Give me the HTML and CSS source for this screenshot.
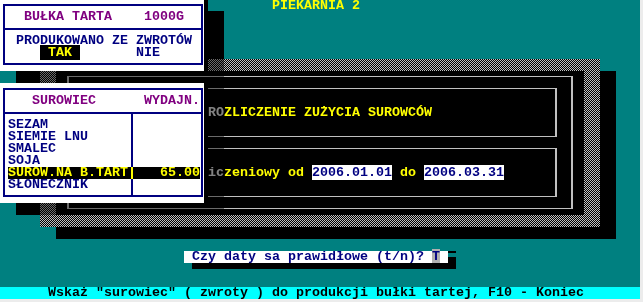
FILE: index.html
```html
<!DOCTYPE html>
<html lang="pl">
<head>
<meta charset="utf-8">
<title>Piekarnia 2</title>
<link rel="stylesheet" href="styles.css">
</head>
<body>
<div class="screen">
  <div class="title">PIEKARNIA 2</div>

  <div class="dialog">
    <div class="dialog-body">
      <div class="frame-outer">
        <div class="frame-inner t-yellow">ROZLICZENIE ZUŻYCIA SUROWCÓW</div>
        <div class="frame-inner t-yellow">iczeniowy od <span class="date">2006.01.01</span> do <span class="date">2006.03.31</span></div>
      </div>
    </div>
  </div>
  <div class="shadow dialog-shadow-right"></div>
  <div class="shadow dialog-shadow-bottom"></div>

  <div class="win win-product">
    <div class="win-frame">
      <div class="row t-magenta">  BUŁKA TARTA    1000G</div>
      <div class="hrule"></div>
      <div class="row t-blue"> PRODUKOWANO ZE ZWROTÓW</div>
      <div class="row t-blue">    <span class="choice"> TAK </span>       NIE</div>
    </div>
  </div>
  <div class="shadow product-shadow-right"></div>
  <div class="shadow product-shadow-bottom"></div>

  <div class="win win-materials">
    <div class="win-frame list-frame">
      <div class="row t-magenta">   SUROWIEC      WYDAJN.</div>
      <div class="hrule"></div>
      <div class="item"><span class="name">SEZAM</span><span class="divider"></span><span class="qty"></span></div>
      <div class="item"><span class="name">SIEMIE LNU</span><span class="divider"></span><span class="qty"></span></div>
      <div class="item"><span class="name">SMALEC</span><span class="divider"></span><span class="qty"></span></div>
      <div class="item"><span class="name">SOJA</span><span class="divider"></span><span class="qty"></span></div>
      <div class="item selected"><span class="name">SUROW.NA B.TART</span><span class="divider"></span><span class="qty">65.00</span></div>
      <div class="item"><span class="name">SŁONECZNIK</span><span class="divider"></span><span class="qty"></span></div>
    </div>
  </div>
  <div class="shadow materials-shadow-bottom"></div>

  <div class="shade shade-column"></div>
  <div class="shade shade-row-top"></div>
  <div class="shade shade-row-bottom"></div>

  <div class="prompt">Czy daty sa prawidłowe (t/n)? <span class="cursor">T</span> </div>
  <div class="shadow prompt-shadow-right"></div>
  <div class="shadow prompt-shadow-bottom"></div>

  <div class="status">Wskaż "surowiec" ( zwroty ) do produkcji bułki tartej, F10 - Koniec</div>
</div>
</body>
</html>
```

FILE: styles.css
```css
html, body {
  margin: 0;
  padding: 0;
}

body {
  background: #ececec;
  width: 643px;
  height: 302px;
  overflow: hidden;
}

.screen {
  position: relative;
  width: 640px;
  height: 300px;
  margin-top: -1px;
  background: #008080;
  display: flex;
  flex-direction: column;
  justify-content: space-between;
  font-family: "Liberation Mono", "DejaVu Sans Mono", monospace;
  font-weight: bold;
  font-size: 13.333px;
  line-height: 12px;
  overflow: hidden;
}

.title {
  padding-top: 1px;
  padding-left: 272px;
  color: #ffff00;
  white-space: pre;
}

.status {
  height: 12px;
  padding-left: 48px;
  background: #00ffff;
  color: #000000;
  white-space: pre;
}

.t-yellow { color: #ffff00; }
.t-magenta { color: #800080; }
.t-blue { color: #000080; }

/* ---------- main dialog ---------- */
.dialog {
  position: absolute;
  left: 40px;
  top: 60px;
  width: 560px;
  height: 168px;
  box-sizing: border-box;
  padding: 12px 16px;
  background: repeating-conic-gradient(#c0c0c0 0 25%, #000000 0 50%) 0 0 / 2px 2px;
}

.dialog-body {
  height: 100%;
  box-sizing: border-box;
  padding: 5px 11px 6px;
  background: #000000;
}

.frame-outer {
  height: 100%;
  box-sizing: border-box;
  border: solid #c0c0c0;
  border-width: 1px 2px;
  padding: 11px 14px;
  display: flex;
  flex-direction: column;
  gap: 11px;
}

/* text starts at column 26, just right of the small windows */
.frame-inner {
  height: 49px;
  box-sizing: border-box;
  border: solid #c0c0c0;
  border-width: 1px 2px;
  padding: 18px 0 0 123px;
  white-space: pre;
  overflow: hidden;
}

.date {
  background: #ffffff;
  color: #000080;
}

/* ---------- shadows ---------- */
.shadow {
  position: absolute;
  background: #000000;
}

.dialog-shadow-right { left: 600px; top: 72px; width: 16px; height: 156px; }
.dialog-shadow-bottom { left: 56px; top: 228px; width: 560px; height: 12px; }

.product-shadow-right { left: 208px; top: 12px; width: 16px; height: 48px; }
.product-shadow-bottom { left: 16px; top: 72px; width: 24px; height: 12px; }
.materials-shadow-bottom { left: 16px; top: 204px; width: 24px; height: 12px; }

/* DOS-style shadow over content: characters turn grey */
.shade {
  position: absolute;
  backdrop-filter: grayscale(1) brightness(0.55);
}

.shade-column { left: 208px; top: 60px; width: 16px; height: 144px; }
.shade-row-top { left: 40px; top: 72px; width: 168px; height: 12px; }
.shade-row-bottom { left: 40px; top: 204px; width: 184px; height: 12px; }

/* ---------- small windows ---------- */
.win {
  position: absolute;
  left: 0;
  width: 208px;
  box-sizing: border-box;
  padding: 5px 1px 6px 3px;
  background: #ffffff;
  border-right: 4px solid #000000;
}

.win-product { top: 0; height: 72px; }
.win-materials { top: 84px; height: 120px; }

.win-frame {
  border: 2px solid #000080;
  padding: 5px 0 4px 3px;
  color: #000080;
}

.row {
  height: 12px;
  white-space: pre;
}

.hrule {
  height: 12px;
  margin-left: -3px;
  background: linear-gradient(#000080, #000080) 0 5px / 100% 2px no-repeat;
}

.choice {
  background: #000000;
  color: #ffff00;
}

.list-frame {
  background: linear-gradient(#000080, #000080) 126px 22px / 2px 100% no-repeat;
}

.item {
  display: grid;
  grid-template-columns: 120px 8px 1fr;
  height: 12px;
  white-space: pre;
}

.item .qty {
  text-align: right;
  padding-right: 1px;
}

.item.selected {
  background: #000000;
  color: #ffff00;
  margin-right: 1px;
}

.item.selected .qty {
  padding-right: 0;
}

.item.selected .divider {
  background: linear-gradient(#ffff00, #ffff00) center / 2px 100% no-repeat;
}

/* ---------- prompt ---------- */
.prompt {
  position: absolute;
  left: 184px;
  top: 252px;
  width: 264px;
  height: 12px;
  box-sizing: border-box;
  padding-left: 8px;
  background: #ffffff;
  color: #000080;
  white-space: pre;
}

.cursor {
  background: #b0b0b0;
}

.prompt-shadow-right {
  left: 448px;
  top: 252px;
  width: 8px;
  height: 12px;
  background: linear-gradient(#000000 0 2px, transparent 2px 6px, #000000 6px);
}

.prompt-shadow-bottom { left: 192px; top: 264px; width: 264px; height: 6px; }
```
